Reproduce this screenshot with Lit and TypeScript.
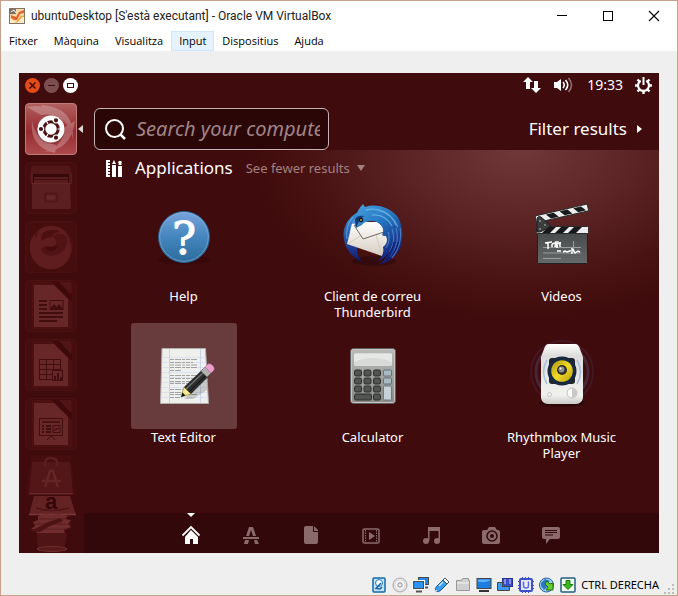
import { LitElement, html, css, svg } from "lit";
import { customElement } from "lit/decorators.js";
import { classMap } from "lit/directives/class-map.js";

/* ---------- dash application icons (106 x 106 tile) ---------- */

const helpIcon = html`<svg class="art" viewBox="0 0 106 106" aria-hidden="true">
  <defs>
    <linearGradient id="hg" x1="0" y1="0" x2="0" y2="1">
      <stop offset="0" stop-color="#7aa3dc" /><stop offset=".5" stop-color="#4485bd" /><stop offset="1" stop-color="#2c6c9c" />
    </linearGradient>
  </defs>
  <ellipse cx="53" cy="78" rx="27" ry="5" fill="#000" opacity=".12" />
  <circle cx="53" cy="55" r="25.5" fill="url(#hg)" stroke="#27608f" />
  <circle cx="53" cy="55" r="24.3" fill="none" stroke="#8fb9e0" stroke-opacity=".55" />
  <text x="53" y="72" text-anchor="middle" font-family="DejaVu Serif, serif" font-size="45" fill="#fff" stroke="#fff">?</text>
</svg>`;

const thunderbirdIcon = html`<svg class="art" viewBox="0 0 106 106" aria-hidden="true">
  <defs>
    <linearGradient id="tb" x1="0" y1="0" x2=".5" y2="1">
      <stop offset="0" stop-color="#4aa3e2" /><stop offset=".45" stop-color="#2576c0" /><stop offset="1" stop-color="#14207c" />
    </linearGradient>
    <linearGradient id="tl" x1="0" y1="0" x2="0" y2="1">
      <stop offset="0" stop-color="#3d93da" /><stop offset="1" stop-color="#10176e" />
    </linearGradient>
    <linearGradient id="te" x1="0" y1="0" x2="0" y2="1">
      <stop offset="0" stop-color="#fff" /><stop offset="1" stop-color="#d5cdc0" />
    </linearGradient>
  </defs>
  <ellipse cx="54" cy="79" rx="22" ry="5" fill="#000" opacity=".25" />
  <path d="M38 30C25 37 21 50 25 62c3 8 8 14 17 18-3-4-5-8-5-12l6-30z" fill="url(#tl)" />
  <path d="M33 35q-8 9-6 22M36 36q-6 7-6 14" fill="none" stroke="#8ac8f2" stroke-opacity=".6" />
  <path d="M32 42 27 62l35 12 8-22-12-12H40z" fill="url(#te)" />
  <path d="m34 43 9 14 21-7" fill="none" stroke="#6f6a64" />
  <path d="m28 62 12-8M62 73l-6-20" stroke="#cdc6ba" stroke-width=".8" />
  <path d="M36 46c-2-4-2-9 0-12 1-4 3-8 7-12l2 3c12-4 25 1 32 9 5 7 6 17 5 25-1 11-10 21-23 23 5-3 7-6 8-9-3 3-6 5-9 6 5-5 6-9 5-14 4-3 5-7 3-11-1 0-3 0-4-1 4-7-3-14-10-14-5 0-9 2-10 4z" fill="url(#tb)" />
  <path d="M46 28c13-3 25 3 30 15M52 33c9-1 16 4 20 11M58 28c8 2 16 8 20 17" fill="none" stroke="#86c9f5" stroke-opacity=".6" stroke-width="1.300" />
  <path d="M80 46c2 10-1 22-8 30M76 46c3 10 1 20-6 29M72 47c3 8 2 16-3 24M68 50c2 5 1 11-2 16" fill="none" stroke="#6db2ea" stroke-opacity=".5" stroke-width="1.200" />
  <path d="M78 60c-1 7-6 14-12 18M74 60c-1 6-4 11-9 15" fill="none" stroke="#0a155c" />
  <path d="m36 46-1-9q3-4 9-3-5 3-8 12z" fill="#17396f" />
  <circle cx="41" cy="38" r="2.200" fill="#07121f" /><circle cx="41" cy="38" r=".9" fill="#e8b13a" />
</svg>`;

const slat = (x: number) => svg`<path d=${`M${x} 45h8l-6 6h-8z`} fill="#17191a" />`;
const topSlat = (x: number) => svg`<path d=${`M${x} 1h8l4 5h-8z`} fill="#17191a" />`;

const videosIcon = html`<svg class="art" viewBox="0 0 106 106" aria-hidden="true">
  <defs>
    <linearGradient id="vb" x1="0" y1="0" x2="0" y2="1">
      <stop offset="0" stop-color="#484b4b" /><stop offset="1" stop-color="#666969" />
    </linearGradient>
  </defs>
  <rect x="28.500" y="51" width="50" height="30.500" rx="1" fill="url(#vb)" stroke="#202222" />
  <rect x="27.500" y="44.500" width="52" height="7" rx="1" fill="#eee" stroke="#2a2c2c" />
  ${[39, 52, 65, 78].slice(0, 3).map(slat)}
  <g transform="translate(26 34) rotate(-13)">
    <rect width="53.500" height="7" rx="1" fill="#eee" stroke="#2a2c2c" />
    ${[11, 25, 39].map(topSlat)}
  </g>
  <path d="M28 37c0-2 2-3 4-2l8 7c2 2 1 3-1 4l-8 4h-3z" fill="#3b3e3e" stroke="#1d1f1f" />
  <circle cx="31" cy="39" r=".8" fill="#ccc" /><circle cx="36" cy="43" r=".8" fill="#ccc" /><circle cx="31" cy="47" r=".8" fill="#ccc" />
  <path d="M34 65.500h38M34 71h38M34 76.500h18M64.500 59v12" stroke="#9b9d9d" />
  <path d="m36 61 7-1m-4 0v7m4-5v3m0-3 3-1m0 4 1-6v6m2-6-1 7m3-6v5m-4-3 5-1M48 69h4m2 1 2-1 2 1 3-1v-1m2-2v6m1-5 2 4 3-2 2 1" fill="none" stroke="#fff" stroke-width="1.500" />
</svg>`;

const editorIcon = html`<svg class="art" viewBox="0 0 106 106" aria-hidden="true">
  <path d="M31 25.500h43.500l3 55h-48z" fill="#efefed" stroke="#aeaead" />
  <path d="M31 34.500h44M31 39.500h44M31 44.500h45M31 49.500h45M31 54.500h45M31 59.500h45M31 64.500h45M31 69.500h45M31 74.500h45" stroke="#dbe2ee" />
  <path d="M38.500 26v54" stroke="#eec5c5" /><path d="M69.500 26v54" stroke="#c9d4ea" />
  <path d="M39 36.500h28M39 39.500h23M39 42h28M39 44.500h28M39 47.500h11M39 52.500h27M39 55.500h28M39 58.500h25M39 60.500h20M39 66.500h13M39 69.500h15M39 71.500h28M39 74.500h10" stroke="#a2a2a2" stroke-width="1.200" stroke-dasharray="4 1 6 1 3 1" />
  <path d="m53 76 24-23-1 14-14 9z" fill="#000" opacity=".16" />
  <path d="m50 74 3-10 7 7z" fill="#f5e88c" stroke="#8d7f35" stroke-width=".6" /><path d="m50 74 1.500-4.500 3 3z" fill="#111" />
  <path d="m53 64 19-18 6 7-18 18z" fill="#2c2d2d" /><path d="m55 66 19-18" stroke="#6f7070" stroke-width="1.400" /><path d="m58 69 18-18" stroke="#111" />
  <path d="m70 48 4-4 6 6-4 4z" fill="#b2b2b2" stroke="#6b6b6b" stroke-width=".6" />
  <path d="m74 44 3-3c3-1 7 3 6 6l-3 3z" fill="#eda0cf" stroke="#b8699b" stroke-width=".6" />
</svg>`;

const key = (x: number, y: number, w = 7) =>
  svg`<rect x=${x} y=${y} width=${w} height="6" rx="1.500" fill="#515450" stroke="#2a2c2a" />`;

const calculatorIcon = html`<svg class="art" viewBox="0 0 106 106" aria-hidden="true">
  <defs>
    <linearGradient id="cb" x1="0" y1="0" x2="0" y2="1">
      <stop offset="0" stop-color="#b9b9b9" /><stop offset="1" stop-color="#8a8a8a" />
    </linearGradient>
  </defs>
  <rect x="30.500" y="25.500" width="45" height="55" rx="3" fill="url(#cb)" stroke="#5d5f5e" />
  <rect x="31.500" y="26.500" width="43" height="53" rx="2" fill="none" stroke="#c4c4c4" />
  <rect x="34" y="30" width="38" height="13" rx="1.500" fill="#d7dad6" />
  <path d="M34 39q19-8 38 0v-8H34z" fill="#e6e8e6" />
  ${[47, 55, 63].map((y) => [34.5, 44, 53.5].map((x) => key(x, y)))}
  ${key(34.5, 71, 17)}${key(53.5, 71)}
  <rect x="63.500" y="47" width="8" height="6" rx="1" fill="#a9bac2" stroke="#63717a" />
  <rect x="63.500" y="55" width="8" height="6" rx="1" fill="#a9bac2" stroke="#63717a" />
  <rect x="63.500" y="63" width="8" height="14" rx="1" fill="#c6d1d8" stroke="#6c7a82" />
</svg>`;

const rhythmboxIcon = html`<svg class="art" viewBox="0 0 106 106" aria-hidden="true">
  <defs>
    <linearGradient id="rb" x1="0" y1="0" x2="0" y2="1">
      <stop offset="0" stop-color="#fff" /><stop offset=".2" stop-color="#dcdcda" /><stop offset=".85" stop-color="#f1f1ef" /><stop offset="1" stop-color="#c9c9c7" />
    </linearGradient>
    <linearGradient id="ry" x1="0" y1="0" x2="1" y2="1">
      <stop offset="0" stop-color="#a89408" /><stop offset=".5" stop-color="#f1d928" /><stop offset="1" stop-color="#b9a10c" />
    </linearGradient>
  </defs>
  <circle cx="53" cy="49" r="31" fill="none" stroke="#4d3a66" stroke-opacity=".25" stroke-width="2" />
  <circle cx="53" cy="49" r="26" fill="none" stroke="#52598f" stroke-opacity=".35" stroke-width="3" />
  <ellipse cx="53" cy="80" rx="23" ry="4" fill="#000" opacity=".3" />
  <path d="M40 21h26c3 0 4 2 5 5l3 8v40c0 4-3 7-7 7H39c-4 0-7-3-7-7V34l3-8c1-3 2-5 5-5z" fill="url(#rb)" />
  <path d="M38 37q-7 12 0 24M68 37q7 12 0 24" fill="none" stroke="#a8bfe0" stroke-width="1.500" />
  <rect x="40" y="35" width="26" height="26" rx="3" fill="#22262a" />
  <circle cx="53" cy="48" r="14.500" fill="#18283f" />
  <circle cx="53" cy="48" r="10.800" fill="url(#ry)" />
  <circle cx="53" cy="47" r="5" fill="#2d2d2a" /><circle cx="52.500" cy="46.500" r="3" fill="#8f8f8c" /><circle cx="51.500" cy="45.500" r="1" fill="#fff" />
  <circle cx="63" cy="70" r="5" fill="#fafafa" stroke="#c2c2c0" /><path d="M63 65a5 5 0 0 1 0 10z" fill="#c9c9c7" />
  <circle cx="40.500" cy="71.500" r="2" fill="none" stroke="#c8c8c6" />
</svg>`;

/* ---------- launcher icons (52 x 52 tile) ---------- */

const ubuntuTile = html`<svg class="tile" viewBox="0 0 52 52" aria-hidden="true">
  <defs>
    <linearGradient id="ut" x1="0" y1="0" x2="0" y2="1">
      <stop offset="0" stop-color="#b0605f" /><stop offset=".55" stop-color="#962a30" /><stop offset="1" stop-color="#ad4b4e" />
    </linearGradient>
  </defs>
  <rect x=".5" y=".5" width="51" height="51" rx="3.500" fill="url(#ut)" stroke="#c27a79" />
  <path d="M2 4q30-6 42 25-7-20-28-17zM50 18q-4 30-32 31 20-4 22-25zM30 50Q4 44 7 18q4 20 24 24zM16 2q34 2 32 34-6-24-26-26z" fill="#fff" opacity=".24" />
  <circle cx="26" cy="27" r="14" fill="#000" opacity=".15" />
  <circle cx="26" cy="26" r="13.500" fill="#fff" />
  <circle cx="26" cy="26" r="7.200" fill="none" stroke="#4d1113" stroke-width="3" />
  <g fill="#4d1113" stroke="#fff" stroke-width="1.200">
    <circle cx="16" cy="26" r="2.700" /><circle cx="31" cy="17.300" r="2.700" /><circle cx="31" cy="34.700" r="2.700" />
  </g>
  <path d="m21 17.500 2 3.400M21 34.500l2-3.400M32.500 26h4" stroke="#fff" stroke-width="1.200" />
</svg>`;

const tileBase = svg`<rect x=".5" y=".5" width="51" height="51" rx="4" fill="#460d0f" stroke="#4a1012" />`;

const filesTile = html`<svg class="tile" viewBox="0 0 52 52" aria-hidden="true">
  ${tileBase}
  <path d="M7 4h38l2 8v7H5v-7z" fill="#531719" /><path d="M6 12h41v10H6z" fill="#571a1c" />
  <path d="M8 12h36v9H8z" fill="#350809" />
  <path d="M9 15h34v6H9z" fill="#5a1d1f" /><path d="M9 17.500h34" stroke="#430d0f" />
  <path d="M7 21h38l1 26H7z" fill="#5c1f21" /><path d="M7 21.500h38" stroke="#652628" />
  <rect x="20" y="31.500" width="12" height="8" rx="1" fill="none" stroke="#501517" stroke-width="1.500" /><rect x="22" y="33.500" width="8" height="4" fill="#64282a" />
</svg>`;

const firefoxTile = html`<svg class="tile" viewBox="0 0 52 52" aria-hidden="true">
  ${tileBase}
  <circle cx="26" cy="26" r="21.500" fill="#511315" />
  <path d="M14 9c10-7 25-5 30 8-7-6-14-5-17-1 4 2 6 5 3 8-4 4-10-1-14 4 3 8 15 9 22 2 5-5 5-12 3-17 9 12 6 29-8 34C18 52 4 41 5 25c0-5 2-8 5-12l1 5z" fill="#5f1d20" />
  <path d="M18 12c5-4 14-4 17-1-5 0-8 3-9 6-4-1-7 1-8 3-3-2-2-6 0-8z" fill="#4c1013" />
  <path d="M20 28c4-4 9-1 13-4-1 5-7 8-13 4z" fill="#440c0e" />
</svg>`;

const pageBase = svg`${tileBase}
  <path d="M7 2h38c1 0 2 1 2 2v43c0 1-1 2-2 2H7z" fill="#4b1012" />
  <path d="M27 2h8l12 12v8z" fill="#3d090a" />
  <path d="M9 5h20l14 14v28H9z" fill="#672628" /><path d="M34 2h12v13z" fill="#511517" />`;

const writerTile = html`<svg class="tile" viewBox="0 0 52 52" aria-hidden="true">
  ${pageBase}
  <path d="M14 21h8M14 25h8M14 29h8M14 33h24M14 37h24M14 41h18" stroke="#420d0e" stroke-width="2" />
  <rect x="25" y="20.500" width="13" height="9" fill="none" stroke="#420d0e" /><path d="m25 29 4-5 3 3 2-3 4 5z" fill="#420d0e" />
</svg>`;

const calcTile = html`<svg class="tile" viewBox="0 0 52 52" aria-hidden="true">
  ${pageBase}
  <path d="M14.500 20.500h21v20h-21zM14.500 25.500h21M14.500 30.500h21M14.500 35.500h21M21.500 20.500v20M28.500 20.500v20" fill="none" stroke="#420d0e" />
  <rect x="27.500" y="31.500" width="10" height="10" fill="#672628" stroke="#420d0e" /><path d="M29 37h2v4h-2zM32 34h2v7h-2zM35 38h2v3h-2z" fill="#420d0e" />
</svg>`;

const impressTile = html`<svg class="tile" viewBox="0 0 52 52" aria-hidden="true">
  ${pageBase}
  <rect x="14.500" y="20.500" width="23" height="17" fill="none" stroke="#420d0e" />
  <path d="M17 24h18" stroke="#420d0e" stroke-width="1.500" /><path d="M17 28h2M17 31h2M17 34h2M21 28h5M21 31h5M21 34h5" stroke="#420d0e" stroke-width="2" />
  <rect x="28" y="27.500" width="7" height="7" fill="none" stroke="#420d0e" /><path d="m29 33 2-3 1 2 2-3M22 42l4-4 4 4" fill="none" stroke="#420d0e" />
</svg>`;

const foldedTiles = html`<svg class="fold" viewBox="0 0 52 96" aria-hidden="true">
  <path d="M6-2h40l5 40H1z" fill="#460d0f" />
  <path d="M7 5h38l3 33H4z" fill="#531719" /><path d="M4 36.500h44" stroke="#6a292b" />
  <path d="M20 9V6q0-5 6-5t6 5v3" fill="none" stroke="#5c1f21" stroke-width="2.500" />
  <path d="M20 30 25 14h3l5 16M17 24h19" fill="none" stroke="#652628" stroke-width="2.500" />
  <path d="M9 39h36l6 19H4z" fill="#632325" /><path d="M4 57.500h47" stroke="#7e3739" stroke-width="1.500" />
  <text x="26" y="52" text-anchor="middle" font-family="Liberation Sans, sans-serif" font-weight="bold" font-size="22" fill="#340708">a</text>
  <path d="M11 51q15 5 33 0" fill="none" stroke="#501416" stroke-width="1.500" />
  <path d="m13 59 8-2 5 1 8-1 9 2-3 3 6 1-3 4 3 3-7 3 1 3-13 1-7-1-8 1-1-4-5-1 4-3-2-4 5-2z" fill="#6e2c2e" />
  <path d="M14 62h26M10 67h36M12 72h30" stroke="#5a1b1d" />
  <path d="M5 74q10-4 16-8l14-5 3 3-13 5-10 6z" fill="#4d1214" />
  <path d="M12 76h30l-3 18H13z" fill="#4e1416" /><ellipse cx="27" cy="92" rx="15" ry="2.500" fill="#581b1d" stroke="#6f2d2f" />
</svg>`;

/* ---------- lens bar icons (20 x 20) ---------- */

const lensIcons = {
  Home: svg`<path d="m1.500 10.500 8.500-8.500 8.500 8.500" fill="none" stroke="currentColor" stroke-width="1.800" /><path d="m10 5 7 7v7h-5v-5H9v5H4v-7z" fill="currentColor" />`,
  Applications: svg`<path d="M8 2h4l3 9h-3l-2-6-2 6H5zM2 12h16v2H2zM4 15h4l-1 4H3zM13 15h3l2 4h-4z" fill="currentColor" />`,
  Files: svg`<path d="M5 1h7v6h5v10q0 2-2 2H5q-2 0-2-2V3q0-2 2-2zM13 1l4 4v1h-4z" fill="currentColor" />`,
  Videos: svg`<rect x="2" y="4" width="16" height="14" rx="1.500" fill="none" stroke="currentColor" stroke-width="1.500" /><path d="M4.500 5v12M15.500 5v12" stroke="currentColor" stroke-dasharray="1.500 1" /><path d="M8 7v8l6-4z" fill="currentColor" />`,
  Music: svg`<path d="M7 2h12v14h-1.500V6h-9v10H7z" fill="currentColor" /><circle cx="5" cy="16" r="3" fill="currentColor" /><circle cx="16" cy="16" r="3" fill="currentColor" />`,
  Photos: svg`<path d="M3 5h3l2-3h6l2 3h1q2 0 2 2v10q0 2-2 2H3q-2 0-2-2V7q0-2 2-2z" fill="currentColor" /><circle cx="11" cy="11" r="5" fill="none" stroke="#33080a" stroke-width="1.500" /><circle cx="11" cy="11" r="2" fill="#33080a" />`,
  Social: svg`<path d="M3 2h14q2 0 2 2v8q0 2-2 2H9l-4 5v-5H3q-2 0-2-2V4q0-2 2-2z" fill="currentColor" /><path d="M4 5.500h12M4 7.500h12M4 10h8" stroke="#33080a" />`,
};

/* ---------- status bar icons (16 x 16) ---------- */

const statusIcons = [
  ["Disc dur", svg`<rect x="2" y="1" width="12" height="14" rx="1" fill="#c7e5f8" stroke="#1668a8" stroke-width="1.500" /><circle cx="8" cy="6" r="3.500" fill="#fff" stroke="#1f7cc4" /><path d="M10 6 5 11.500l4 .5 2-2" fill="none" stroke="#1668a8" stroke-width="1.500" />`],
  ["Disc òptic", svg`<circle cx="8" cy="8" r="7" fill="#e2e2e2" stroke="#a9a9a9" /><circle cx="8" cy="8" r="4" fill="none" stroke="#fff" /><circle cx="8" cy="8" r="2" fill="#f4f4f4" stroke="#999" />`],
  ["Xarxa", svg`<rect x="5.500" y=".5" width="10" height="7" fill="#2486e6" stroke="#4b4b4b" /><path d="M12 10.500h3" stroke="#555" stroke-width="2" /><rect x=".5" y="4.500" width="10" height="7" fill="#2e93f2" stroke="#fff" stroke-width="3" /><rect x=".5" y="4.500" width="10" height="7" fill="#2e93f2" stroke="#4b4b4b" /><path d="M3 14.500h6" stroke="#555" stroke-width="2" />`],
  ["USB", svg`<path d="M3 9 9 3l4 4-6 6q-3 3-5 1t1-5z" fill="#3c9cec" stroke="#115a9e" /><path d="m9 3 2-2 4 4-2 2z" fill="#fff" stroke="#456" /><path d="m5 9 4-4M1 15l2-2" stroke="#bfe2ff" stroke-width="1.500" />`],
  ["Carpetes compartides", svg`<path d="M1.500 13.500v-10h5l1-2h6v2h1v10z" fill="#d0d0d0" stroke="#999" /><path d="M2 6h12" stroke="#f4f4f4" />`],
  ["Pantalla", svg`<rect x="1" y="1.500" width="14" height="10" fill="#1d7ee0" stroke="#444" /><path d="M2 4.500q6 2 12-1v-1H2z" fill="#5fb0f7" /><path d="M3 14h10" stroke="#333" stroke-width="2" />`],
  ["Captura", svg`<rect x="5.500" y="1.500" width="10" height="8" fill="#3a50c8" stroke="#27308c" /><path d="M.5 5.500h5v4h7v4H.500z" fill="#3d9af0" stroke="#444" /><path d="M8 2v5M13 2v5" stroke="#cfd6ff" />`],
  ["Processador", svg`<rect x="2" y="2" width="12" height="12" rx="1" fill="#e6e9ff" stroke="#3d50c8" stroke-width="2" /><path d="M4 .5h1M7 .5h1M10 .5h1M4 15.500h1M7 15.500h1M10 15.500h1M.5 4v1M.5 8v1M.5 11v1M15.500 4v1M15.500 8v1M15.500 11v1" stroke="#3344b8" /><path d="M5.500 4.500V9q0 2 2.500 2t2.500-2V4.500" fill="none" stroke="#5a6bd8" stroke-width="1.500" />`],
  ["Ratolí", svg`<circle cx="7.500" cy="8" r="7" fill="#9fd4f8" stroke="#245f9c" /><path d="m2 6 4-4 5 2-4 3 1 3-3 3-3-4z" fill="#2a77bd" /><path d="m8 4 3 3 3-1v7H7l2-3-3-3z" fill="#62cf35" stroke="#276c12" />`],
  ["Teclat", svg`<rect x="1" y="1" width="14" height="14" rx="1" fill="#f2fff0" stroke="#245f80" stroke-width="1.500" /><path d="M6 3.500h4v4h3l-5 5-5-5h3z" fill="#3cb81f" stroke="#1d7a0c" />`],
] as const;

@customElement("app-root")
export class AppRoot extends LitElement {
  static styles = css`
    :host { display: block; }
    * { box-sizing: border-box; }
    svg { display: block; flex: none; overflow: visible; }
    button {
      appearance: none; border: 0; margin: 0; padding: 0; background: none;
      color: inherit; font: inherit; display: block;
    }
    .window {
      min-height: 100vh; display: flex; flex-direction: column;
      border: 1px solid #c9a088; background: #efefef;
    }
    .titlebar {
      display: flex; align-items: center; height: 30px; padding-left: 8px; gap: 6px;
      background: #fff; color: #222; font-family: Roboto, "Open Sans", sans-serif;
    }
    .title { flex: 1; margin: 0; font-size: 12px; line-height: 16px; font-weight: 400; white-space: nowrap; }
    .controls { display: flex; height: 28px; }
    .control { width: 46px; display: flex; align-items: center; justify-content: center; }
    .menubar {
      display: flex; height: 20px; background: #fff; color: #000;
      font: 11px/18px "Open Sans", "Noto Sans", sans-serif;
    }
    .menu { padding: 0 7px; border: 1px solid transparent; white-space: nowrap; }
    .menu.active { background: #e5f3ff; border-color: #cce8ff; }

    .guest {
      margin: 22px 18px 0; background: #400b0c; color: #fff;
      font-family: "Noto Sans", "Open Sans", sans-serif; display: grid;
      grid-template-columns: 65px 1fr; grid-template-rows: 24px auto;
    }
    .panel {
      grid-column: 1 / -1; display: flex; align-items: center;
      padding: 0 7px 0 6px; gap: 12px; font-size: 14px;
    }
    .dots { display: flex; gap: 4px; margin-right: auto; }
    .clock { line-height: 20px; }
    .launcher { display: flex; flex-direction: column; gap: 7px; padding: 6px 6px 0; }
    .launch { width: 52px; }
    .home { display: flex; align-items: center; gap: 1px; width: 58px; }
    .tile { width: 52px; height: 52px; }
    .fold { width: 52px; height: 96px; }

    .dash { display: flex; flex-direction: column; min-width: 0; }
    .top {
      display: flex; justify-content: space-between; align-items: center;
      padding: 11px 16px 0 10px;
    }
    .search {
      display: flex; align-items: center; gap: 10px; width: 235px; height: 42px;
      padding: 0 8px 0 10px; border: 1px solid #c4b3b3; border-radius: 6px; background: #2b0607;
    }
    .field {
      flex: 1; min-width: 0; height: 30px; padding: 0; border: 0; outline: 0; background: none;
      color: #fff; font: italic 20px/30px "Noto Sans", "Open Sans", sans-serif;
    }
    .field::placeholder { color: #a08586; opacity: 1; }
    .filter { display: flex; align-items: center; gap: 10px; font-size: 17px; line-height: 24px; }
    .results {
      flex: 1; padding: 4px 3px 0 5px;
      background: radial-gradient(ellipse 270px 170px at 76% 0, #703838, #5d2526 40%, #4a1314 75%, rgba(64, 11, 12, 0));
    }
    .heading { display: flex; align-items: center; height: 28px; padding-left: 17px; }
    .category { margin: 0 13px 0 12px; font-size: 17px; line-height: 28px; font-weight: 400; }
    .fewer { display: flex; align-items: center; gap: 7px; color: #a18182; font-size: 13px; line-height: 28px; }
    .grid { display: grid; grid-template-columns: repeat(3, 1fr); row-gap: 3px; }
    .app { display: flex; flex-direction: column; align-items: center; min-height: 138px; font-size: 13px; line-height: 16px; }
    .art { width: 106px; height: 106px; border-radius: 3px; }
    .selected .art { background: #683c3d; }
    .label { max-width: 120px; text-align: center; }
    .lenses { display: flex; justify-content: center; height: 40px; padding-right: 2px; background: #33080a; }
    .lens {
      width: 60px; height: 40px; position: relative; display: flex; align-items: center;
      justify-content: center; padding-top: 4px; color: #8b6a6b;
    }
    .lens.active { color: #fff; }
    .lens.active::before {
      content: ""; position: absolute; top: 0; left: 26px;
      border: 4px solid transparent; border-top-color: #fff; border-bottom: 0;
    }
    .statusbar {
      margin-top: auto; display: flex; justify-content: flex-end; align-items: center; gap: 5px;
      height: 21px; padding-right: 1px; color: #000;
      font: 11px/16px "Noto Sans", "Open Sans", sans-serif;
    }
    .hostkey { white-space: nowrap; }
    .grip { align-self: flex-end; }
  `;

  private menus = ["Fitxer", "Màquina", "Visualitza", "Input", "Dispositius", "Ajuda"];

  private apps = [
    { name: "Help", icon: helpIcon },
    { name: "Client de correu Thunderbird", icon: thunderbirdIcon },
    { name: "Videos", icon: videosIcon },
    { name: "Text Editor", icon: editorIcon, selected: true },
    { name: "Calculator", icon: calculatorIcon },
    { name: "Rhythmbox Music Player", icon: rhythmboxIcon },
  ];

  private launchers = [
    { name: "Files", icon: filesTile },
    { name: "Firefox", icon: firefoxTile },
    { name: "LibreOffice Writer", icon: writerTile },
    { name: "LibreOffice Calc", icon: calcTile },
    { name: "LibreOffice Impress", icon: impressTile },
    { name: "More", icon: foldedTiles },
  ];

  private titlebar() {
    return html`<header class="titlebar">
      <svg width="16" height="16" viewBox="0 0 16 16" aria-hidden="true">
        <rect x=".5" y=".5" width="15" height="15" fill="#f6d9a4" stroke="#857464" />
        <path d="M1 1h6v5H1z" fill="#766c64" /><path d="m2 4 3-2 2 3" fill="none" stroke="#fff" />
        <path d="m2 7 5 2 3-5 5-2v3l-4 1-3 6H5l-3-2z" fill="#e5632c" /><path d="M1 10q5 3 4 5H1zM11 8l4-1v8H8z" fill="#fbeccb" /><path d="m8 14 4-5 3-1" fill="none" stroke="#e9a43c" stroke-width="1.500" />
      </svg>
      <h1 class="title">ubuntuDesktop [S'està executant] - Oracle VM VirtualBox</h1>
      <div class="controls">
        <button class="control" aria-label="Minimitza"><svg width="10" height="10" viewBox="0 0 10 10"><path d="M0 4.500h10" stroke="#000" /></svg></button>
        <button class="control" aria-label="Maximitza"><svg width="10" height="10" viewBox="0 0 10 10"><rect x=".5" y=".5" width="9" height="9" fill="none" stroke="#000" /></svg></button>
        <button class="control" aria-label="Tanca"><svg width="10" height="10" viewBox="0 0 10 10"><path d="m0 0 10 10M10 0 0 10" stroke="#000" stroke-width="1.100" /></svg></button>
      </div>
    </header>`;
  }

  private panel() {
    return html`<div class="panel">
      <div class="dots">
        <button aria-label="Close"><svg width="15" height="15" viewBox="0 0 15 15"><circle cx="7.500" cy="7.500" r="7.500" fill="#e34c16" /><path d="m4.500 4.500 6 6m0-6-6 6" stroke="#400b0c" stroke-width="1.500" /></svg></button>
        <button aria-label="Minimize"><svg width="15" height="15" viewBox="0 0 15 15"><circle cx="7.500" cy="7.500" r="7.500" fill="#7b4f50" /><path d="M4 7.500h7" stroke="#400b0c" /></svg></button>
        <button aria-label="Restore"><svg width="15" height="15" viewBox="0 0 15 15"><circle cx="7.500" cy="7.500" r="7.500" fill="#fff" /><rect x="4.500" y="5.500" width="6" height="4" fill="none" stroke="#400b0c" /></svg></button>
      </div>
      <button aria-label="Network"><svg width="18" height="18" viewBox="0 0 18 18" fill="#fff"><path d="m5 1 5 5H7v7H3V6H0zM11 5h4v7h3l-5 5-5-5h3z" /></svg></button>
      <button aria-label="Sound"><svg width="22" height="18" viewBox="0 0 22 18" fill="none" stroke="#fff" stroke-width="1.600"><path d="M1 6h3l4-3v12l-4-3H1z" fill="#fff" stroke="none" /><path d="M10 6q2.500 3 0 6M12.500 4q4.500 5 0 10" /><path d="M15.500 2q6 7 0 14" stroke="#936f70" /></svg></button>
      <span class="clock">19:33</span>
      <button aria-label="Session"><svg width="17" height="17" viewBox="0 0 17 17" fill="none" stroke="#fff"><path d="M5.700 3.700a5.500 5.500 0 1 0 5.600 0" stroke-width="2.200" /><path d="M8.500 0v8" stroke-width="2" /><path d="m2.500 2.500 2 2m8 0 2-2M0 8.500h3m11 0h3M2.500 14.500l2-2m8 0 2 2M8.500 14v3" stroke-width="2.400" /></svg></button>
    </div>`;
  }

  private dash() {
    return html`<main class="dash">
      <div class="top">
        <label class="search">
          <svg width="21" height="21" viewBox="0 0 21 21" fill="none" stroke="#fff" stroke-width="2"><circle cx="9.500" cy="9.500" r="8.500" /><path d="m15.500 15.500 4.500 4.500" stroke-width="2.500" /></svg>
          <input class="field" type="text" aria-label="Search" placeholder="Search your compute" />
        </label>
        <button class="filter">Filter results<svg width="6" height="8" viewBox="0 0 6 8"><path d="M0 0v8l5-4z" fill="#fff" /></svg></button>
      </div>
      <section class="results">
        <div class="heading">
          <svg width="17" height="19" viewBox="0 0 17 19" fill="#fff" aria-hidden="true"><path d="M0 1h4v2H2v1h2v2H2v1h2v2H2v1h2v2H2v1h2v2H2v1h2v2H0zM6 6h4v12H6zM6 5l2-4 2 4zM12 7h4v11h-4z" /><circle cx="14" cy="3.500" r="1.800" /><path d="M12.500 6h3V5h-3z" /></svg>
          <h2 class="category">Applications</h2>
          <button class="fewer">See fewer results<svg width="8" height="6" viewBox="0 0 8 6"><path d="M0 0h8L4 6z" fill="#a18182" /></svg></button>
        </div>
        <div class="grid">
          ${this.apps.map((a) => html`<button class=${classMap({ app: true, selected: !!a.selected })}>${a.icon}<span class="label">${a.name}</span></button>`)}
        </div>
      </section>
      <nav class="lenses">
        ${Object.entries(lensIcons).map(([name, icon], i) => html`<button class=${classMap({ lens: true, active: i === 0 })} aria-label=${name}><svg width="20" height="20" viewBox="0 0 20 20">${icon}</svg></button>`)}
      </nav>
    </main>`;
  }

  render() {
    return html`<div class="window">
      ${this.titlebar()}
      <nav class="menubar">${this.menus.map((m) => html`<button class=${classMap({ menu: true, active: m === "Input" })}>${m}</button>`)}</nav>
      <div class="guest">
        ${this.panel()}
        <aside class="launcher">
          <button class="home" aria-label="Dash">${ubuntuTile}<svg width="5" height="8" viewBox="0 0 5 8"><path d="M5 0v8L0 4z" fill="#e0d5d5" /></svg></button>
          ${this.launchers.map((l) => html`<button class="launch" aria-label=${l.name}>${l.icon}</button>`)}
        </aside>
        ${this.dash()}
      </div>
      <footer class="statusbar">
        ${statusIcons.map(([name, icon]) => html`<svg width="16" height="16" viewBox="0 0 16 16" role="img" aria-label=${name}>${icon}</svg>`)}
        <span class="hostkey">CTRL DERECHA</span>
        <svg class="grip" width="12" height="12" viewBox="0 0 12 12" fill="#bdbdbd" aria-hidden="true"><path d="M8 1h2v2H8zM8 5h2v2H8zM8 9h2v2H8zM4 5h2v2H4zM4 9h2v2H4zM0 9h2v2H0z" /></svg>
      </footer>
    </div>`;
  }
}
